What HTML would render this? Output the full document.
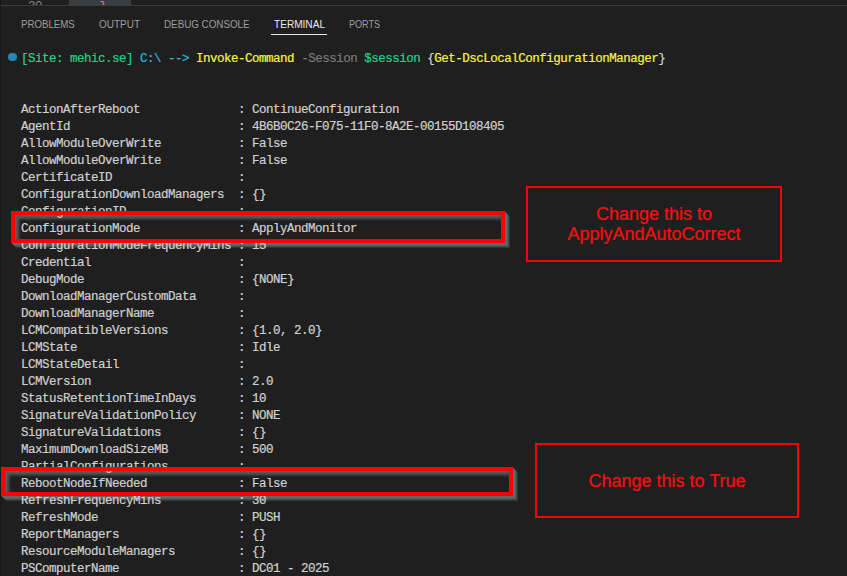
<!DOCTYPE html>
<html><head><meta charset="utf-8"><title>Terminal</title>
<style>
html,body{margin:0;padding:0;}
body{width:847px;height:576px;overflow:hidden;background:#1f1f1f;position:relative;font-family:"Liberation Sans",sans-serif;}
#edge{position:absolute;left:0;top:0;width:1px;height:576px;background:#181818;}
#editor{position:absolute;left:0;top:0;width:847px;height:5px;background:#1f1f1f;overflow:hidden;}
#sel{position:absolute;left:69px;top:0;width:62px;height:5px;background:#3a3d42;}
#ln{position:absolute;left:28px;top:-1.5px;font:12.5px/17px "Liberation Mono",monospace;color:#808488;letter-spacing:-0.5px;}
#br{position:absolute;left:99.5px;top:-1.5px;font:12.5px/17px "Liberation Mono",monospace;color:#da70d6;}
#pborder{position:absolute;left:0;top:5px;width:847px;height:1px;background:#3a3a3a;}
.tab{position:absolute;top:17px;height:14px;line-height:14px;font-size:11px;color:#9d9d9d;white-space:nowrap;transform-origin:0 50%;}
#tul{position:absolute;left:271px;top:34px;width:56px;height:1px;background:#e7e7e7;}
#dot{position:absolute;left:8px;top:52.5px;width:8.5px;height:8.5px;border-radius:50%;background:#2488b8;}
.term{position:absolute;left:21px;margin:0;font:12.5px/17px "Liberation Mono",monospace;letter-spacing:-0.5px;color:#d0d0d0;white-space:pre;z-index:2;-webkit-text-stroke:0.2px currentColor;}
#prompt{top:50.5px;}
#out{top:101.5px;}
.g{color:#23d18b} .c{color:#29b8db} .y{color:#f5f543} .d{color:#7a7a7a} .w{color:#d4d4d4}
.hls{position:absolute;box-sizing:border-box;border:4px solid transparent;z-index:1;
 box-shadow:1px 1px 0 rgba(98,102,102,.9),2px 2px 0 rgba(98,102,102,.85),3px 3px 0 rgba(96,100,100,.75),4px 4px 1px rgba(94,97,97,.55),5px 5px 1px rgba(90,92,92,.3),
 inset 5px 5px 3px -1px rgba(100,105,105,.8);}
.hl{position:absolute;box-sizing:border-box;border:4px solid #ff0000;z-index:3;}
.note{position:absolute;box-sizing:border-box;border:2px solid #f40505;color:#ff0c0c;-webkit-text-stroke:0.2px #ff0c0c;font-size:18px;line-height:20px;text-align:center;display:flex;align-items:center;justify-content:center;}
</style></head><body>
<div id="editor"><div id="sel"></div><div id="ln">30</div><div id="br">}</div></div>
<div id="pborder"></div>
<div id="edge"></div>
<span class="tab" id="t1" style="left:21.2px;transform:scaleX(0.8799)">PROBLEMS</span>
<span class="tab" id="t2" style="left:98.9px;transform:scaleX(0.9065)">OUTPUT</span>
<span class="tab" id="t3" style="left:163.9px;transform:scaleX(0.8919)">DEBUG CONSOLE</span>
<span class="tab" id="t4" style="left:273.7px;transform:scaleX(0.9168);color:#ececec">TERMINAL</span>
<span class="tab" id="t5" style="left:349.2px;transform:scaleX(0.8223)">PORTS</span>
<div id="tul"></div>
<div id="dot"></div>
<pre class="term" id="prompt"><span class="g">[Site: mehic.se]</span> <span class="c">C:\ --&gt;</span> <span class="y">Invoke-Command</span> <span class="d">-Session</span> <span class="g">$session</span> <span class="w">{</span><span class="y">Get-DscLocalConfigurationManager</span><span class="w">}</span></pre>
<pre class="term" id="out">ActionAfterReboot              : ContinueConfiguration
AgentId                        : 4B6B0C26-F075-11F0-8A2E-00155D108405
AllowModuleOverWrite           : False
AllowModuleOverWrite           : False
CertificateID                  :
ConfigurationDownloadManagers  : {}
ConfigurationID                :
ConfigurationMode              : ApplyAndMonitor
ConfigurationModeFrequencyMins : 15
Credential                     :
DebugMode                      : {NONE}
DownloadManagerCustomData      :
DownloadManagerName            :
LCMCompatibleVersions          : {1.0, 2.0}
LCMState                       : Idle
LCMStateDetail                 :
LCMVersion                     : 2.0
StatusRetentionTimeInDays      : 10
SignatureValidationPolicy      : NONE
SignatureValidations           : {}
MaximumDownloadSizeMB          : 500
PartialConfigurations          :
RebootNodeIfNeeded             : False
RefreshFrequencyMins           : 30
RefreshMode                    : PUSH
ReportManagers                 : {}
ResourceModuleManagers         : {}
PSComputerName                 : DC01 - 2025</pre>
<div class="hls" style="left:11px;top:211px;width:494px;height:32px"></div>
<div class="hls" style="left:1px;top:467px;width:512px;height:29px"></div>
<div class="hl" style="left:11px;top:211px;width:494px;height:32px"></div>
<div class="hl" style="left:1px;top:467px;width:512px;height:29px"></div>
<div class="note" style="left:526px;top:186px;width:256px;height:76px"><div>Change this to<br>ApplyAndAutoCorrect</div></div>
<div class="note" style="left:535px;top:443px;width:264px;height:75px"><div>Change this to True</div></div>
</body></html>
